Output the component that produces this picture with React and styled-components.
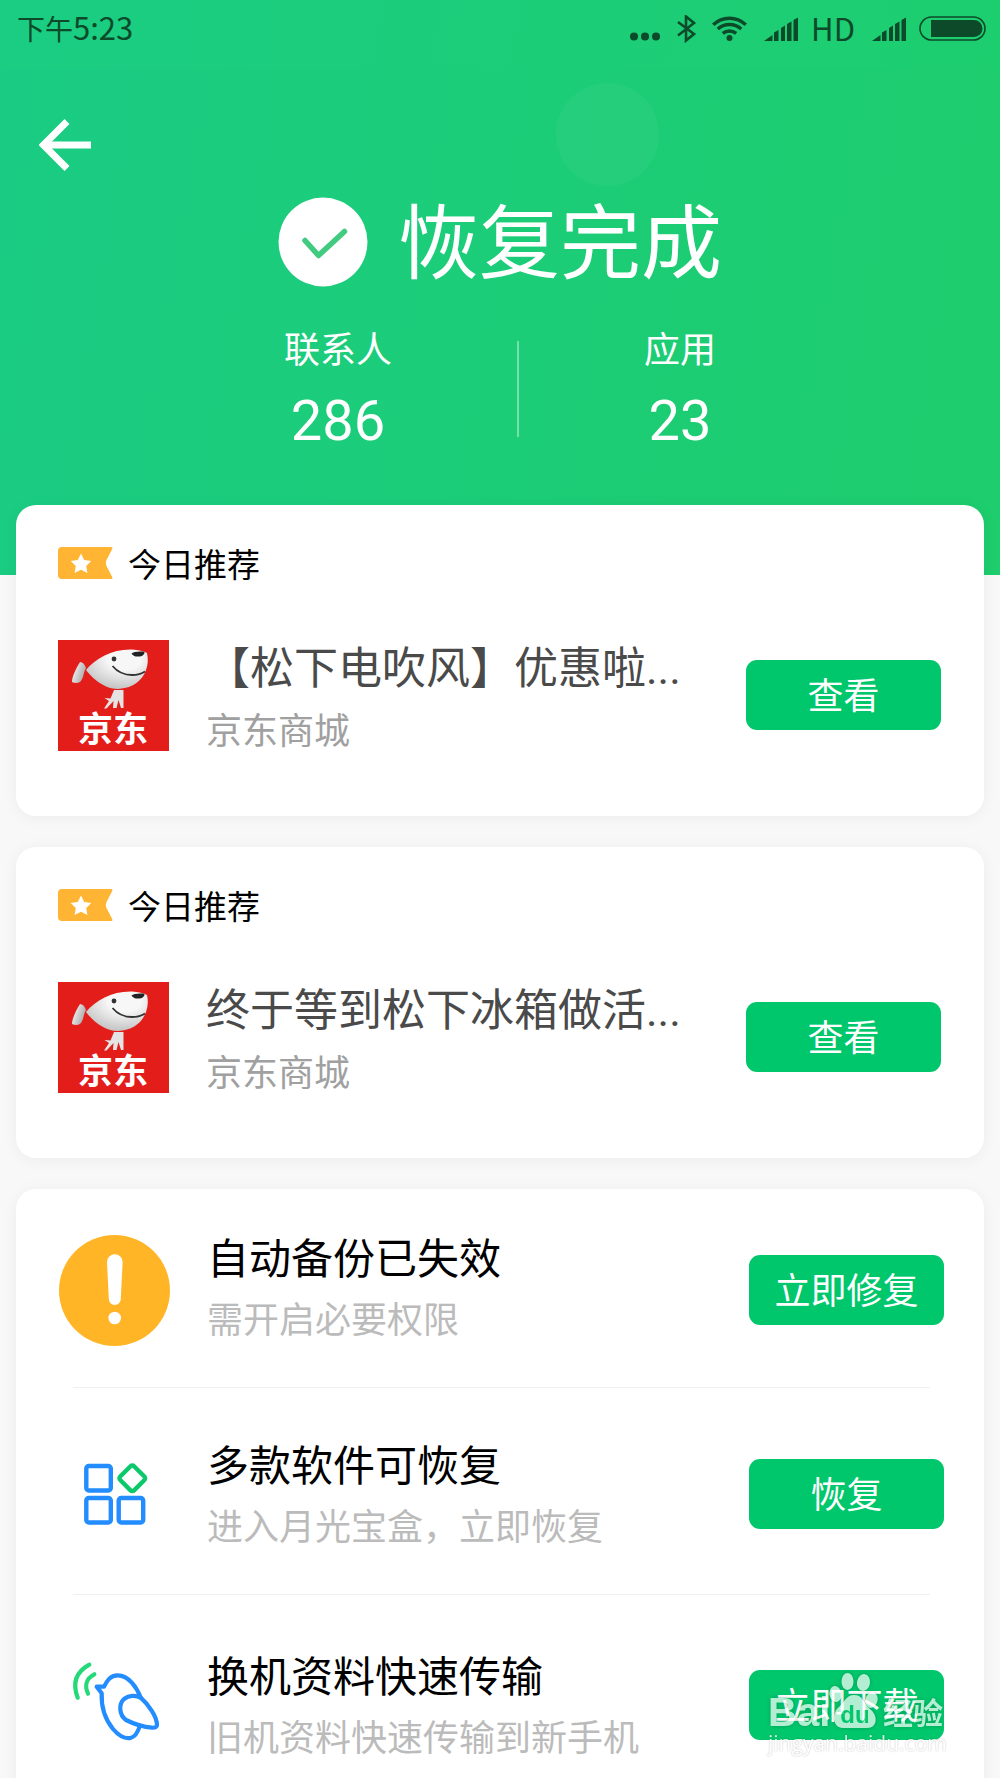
import React from 'react';
import styled, { createGlobalStyle } from 'styled-components';

const GlobalStyle = createGlobalStyle`
  * {
    box-sizing: border-box;
  }
  body {
    margin: 0;
    background: #f8f8f8;
    font-family: Roboto, 'Noto Sans CJK SC', sans-serif;
  }
  h1, h2, h3, p, dl, dt, dd, ul {
    margin: 0;
    padding: 0;
    font-weight: 400;
  }
  svg {
    display: block;
    flex: none;
  }
`;

const Screen = styled.div`
  position: relative;
  height: 100vh;
  overflow: hidden;
`;

const Hero = styled.header`
  position: relative;
  height: 575px;
  color: #fff;
  background: linear-gradient(100deg, #1acc84, #1ecd6c);
`;

const Bubble = styled.span`
  position: absolute;
  top: 83px;
  left: calc(50% + 56px);
  width: 103px;
  height: 103px;
  border-radius: 50%;
  background: rgba(255, 255, 255, 0.04);
`;

const StatusBar = styled.div`
  display: flex;
  align-items: center;
  justify-content: space-between;
  height: 69px;
  padding: 0 13px 12px 17px;
  font-family: 'Noto Sans CJK SC', sans-serif;
  color: #0c4a2a;
  background: rgba(30, 215, 130, 0.1);
`;

const StatusText = styled.span`
  padding-bottom: 2px;
  font-size: 31px;
  line-height: 44px;
`;

const Period = styled.span`
  font-size: 28px;
`;

const StatusIcons = styled.div`
  display: flex;
  align-items: center;
  gap: 13px;
`;

const BackButton = styled.button`
  display: block;
  margin: 42px 0 0 31px;
  padding: 8px;
  border: 0;
  background: none;
`;

const Headline = styled.div`
  display: flex;
  align-items: center;
  justify-content: center;
  gap: 30px;
  height: 90px;
  margin-top: 18px;
`;

const HeadlineText = styled.h1`
  padding-top: 6px;
  font-size: 81px;
  line-height: 90px;
`;

const Stats = styled.dl`
  display: flex;
  align-items: center;
  justify-content: center;
  gap: 125px;
  margin-top: 37px;
`;

const Stat = styled.div`
  text-align: center;
`;

const StatName = styled.dt`
  font-size: 36px;
  line-height: 54px;
`;

const StatValue = styled.dd`
  font-size: 56px;
  line-height: 86px;
`;

const StatDivider = styled.span`
  width: 2px;
  height: 96px;
  margin-bottom: 10px;
  background: rgba(255, 255, 255, 0.4);
`;

const Content = styled.main`
  position: relative;
  display: flex;
  flex-direction: column;
  gap: 31px;
  margin: -70px 16px 0;
`;

const Card = styled.section`
  border-radius: 20px;
  background: #fff;
  box-shadow: 0 2px 16px rgba(0, 0, 0, 0.05);
`;

const PromoCard = styled(Card)`
  padding: 34px 43px 56px 42px;
`;

const PromoHeader = styled.div`
  display: flex;
  align-items: center;
  gap: 15px;
  height: 48px;
  margin-bottom: 43px;
`;

const PromoHeading = styled.h2`
  padding-top: 5px;
  font-size: 33px;
  line-height: 48px;
  color: #000;
`;

const Row = styled.div`
  display: flex;
  align-items: center;
  gap: 37px;
`;

const Texts = styled.div`
  flex: 1;
  min-width: 0;
`;

const PromoTitle = styled.h3`
  padding-top: 4px;
  font-size: 44px;
  line-height: 70px;
  color: #4a4a4a;
  white-space: nowrap;
`;

const PromoShop = styled.p`
  font-size: 36px;
  line-height: 56px;
  color: #a0a0a0;
`;

const ActionButton = styled.button`
  flex: none;
  width: 195px;
  height: 70px;
  padding: 4px 0 0;
  border: 0;
  border-radius: 11px;
  font-family: inherit;
  font-size: 36px;
  line-height: 66px;
  color: #fff;
  background: #00c76c;
`;

const FeatureList = styled.ul`
  list-style: none;
`;

const FeatureItem = styled.li`
  & + &::before {
    content: '';
    display: block;
    height: 1px;
    margin: 0 54px 0 57px;
    background: #f0f0f0;
  }
`;

const FeatureRow = styled(Row)`
  padding: 42px 40px 36px 43px;
  ${FeatureItem}:first-child & {
    padding-top: 40px;
    padding-bottom: 36px;
  }
  ${FeatureItem}:last-child & {
    padding-top: 46px;
  }
`;

const FeatureTexts = styled(Texts)`
  ${FeatureItem} + ${FeatureItem} & {
    padding-top: 6px;
  }
`;

const FeatureTitle = styled.h3`
  font-size: 42px;
  line-height: 62px;
  color: #000;
`;

const FeatureNote = styled.p`
  font-size: 36px;
  line-height: 60px;
  color: #bbb;
`;

const Watermark = styled.div`
  position: absolute;
  right: 52px;
  bottom: 21px;
  width: 180px;
  color: #fff;
  pointer-events: none;
`;

const Brand = styled.div`
  display: flex;
  align-items: flex-end;
  height: 57px;
  opacity: 0.7;
  filter: drop-shadow(0 0 2px rgba(0, 0, 0, 0.3));
`;

const BrandLatin = styled.span`
  width: 61px;
  height: 44px;
  font: bold 40px/54px 'Liberation Sans', sans-serif;
`;

const BrandChinese = styled.span`
  margin-left: 5px;
  font-size: 30px;
  font-weight: 700;
  line-height: 30px;
`;

const BrandUrl = styled.div`
  font: 21px/28px 'Open Sans', sans-serif;
  opacity: 0.8;
  text-shadow: 0 0 2px rgba(0, 0, 0, 0.35);
`;

const DotsIcon = () => (
  <svg width="30" height="28" viewBox="0 0 30 28" fill="currentColor">
    <circle cx="4" cy="21.5" r="4" />
    <circle cx="15" cy="21.5" r="4" />
    <circle cx="26" cy="21.5" r="4" />
  </svg>
);

const BluetoothIcon = () => (
  <svg width="26" height="28" viewBox="0 0 26 28" fill="none" stroke="currentColor" strokeWidth="2.6">
    <path d="M5 7 21 19 13 25.5V1.5L21 8 5 20.5" />
  </svg>
);

const WifiIcon = () => (
  <svg width="35" height="28" viewBox="0 0 35 28" fill="none" stroke="currentColor" strokeWidth="3.4">
    <path d="M1.2 9.8a23.5 23.5 0 0 1 32.6 0" />
    <path d="M5.8 14a17.5 17.5 0 0 1 23.4 0" />
    <path d="M10.8 18.4a10.5 10.5 0 0 1 13.4 0" />
    <circle cx="17.5" cy="23" r="3" fill="currentColor" stroke="none" />
  </svg>
);

const SignalIcon = () => (
  <svg width="38" height="28" viewBox="0 0 38 28" fill="currentColor">
    <path d="M4 26 12.5 20V26Z" />
    <path d="M14 17.5 18.5 15V26H14Z" />
    <path d="M21 13 25 10.5V26H21Z" />
    <path d="M27 9 31.5 6.5V26H27Z" />
    <path d="M33.5 5 38 2.5V26H33.5Z" />
  </svg>
);

const BatteryIcon = () => (
  <svg width="68" height="28" viewBox="0 0 68 28">
    <rect x="1" y="2" width="65" height="23" rx="11.5" fill="none" stroke="currentColor" strokeWidth="1.6" />
    <path d="M12 5H55a8.5 8.5 0 0 1 0 17H12Z" fill="currentColor" />
  </svg>
);

const ArrowIcon = () => (
  <svg width="52" height="52" viewBox="0 0 52 52" fill="none" stroke="#fff" strokeWidth="7">
    <path d="M52 26H6" />
    <path d="M28 2.5 4.5 26 28 49.5" />
  </svg>
);

const CheckIcon = () => (
  <svg width="90" height="90" viewBox="0 0 90 90">
    <circle cx="45" cy="45" r="44.5" fill="#fff" />
    <path
      d="M27 43.5 40.5 58.5 66.5 34.5"
      fill="none"
      stroke="#40cb80"
      strokeWidth="5.5"
      strokeLinecap="round"
      strokeLinejoin="round"
    />
  </svg>
);

const TagIcon = () => (
  <svg width="55" height="32" viewBox="0 0 55 32">
    <path
      d="M4 0H53q2 0 1.2 2L48.5 13q-1.5 3 0 6L54.2 30q.8 2-1.2 2H4a4 4 0 0 1-4-4V4a4 4 0 0 1 4-4Z"
      fill="#ffb433"
    />
    <path
      d="M23 6.5 26.2 12.9 33.3 14 28.2 19 29.4 26 23 22.7 16.6 26 17.8 19 12.7 14 19.8 12.9Z"
      fill="#fff"
    />
  </svg>
);

const ShopLogo = () => (
  <svg width="111" height="111" viewBox="0 0 111 111">
    <defs>
      <radialGradient id="fur" cx="0.62" cy="0.25" r="0.75">
        <stop offset="0.35" stopColor="#f7f7f7" />
        <stop offset="1" stopColor="#c4c4c4" />
      </radialGradient>
      <linearGradient id="ear" x1="0" y1="0" x2="1" y2="0.5">
        <stop offset="0.3" stopColor="#e8e8e8" />
        <stop offset="1" stopColor="#a8a8a8" />
      </linearGradient>
    </defs>
    <rect width="111" height="111" fill="#e31d1a" />
    <path d="M22 22C18 28 14 37 14 42Q18 44 22 42C26 38 25 33 28 28Q26 22 22 22Z" fill="url(#ear)" />
    <path
      d="M28 30C38 18 54 9 74 9.5Q84 10 89 13Q91 22 88 30C84 41 75 48 60 49C46 49 34 38 28 30Z"
      fill="url(#fur)"
    />
    <circle cx="56" cy="19" r="2.4" fill="#333" />
    <path d="M73.5 13.5Q76 11 85.5 11.5Q88 13 84 16Q76 18 73.5 13.5Z" fill="#222" />
    <path d="M54.5 26Q62 35 74 35Q82 35 87 31.5" fill="none" stroke="#333" strokeWidth="1.8" />
    <path
      d="M56 50H65.5V68H63L60.5 60L58.5 68H55L55.5 61L48.5 68.5H46L51 61L46.5 58L52.5 58.5Z"
      fill="#e4e4e4"
    />
    <text
      x="55"
      y="102"
      textAnchor="middle"
      fontFamily="Noto Sans CJK SC, sans-serif"
      fontSize="35"
      fontWeight="700"
      fill="#fff"
    >
      京东
    </text>
  </svg>
);

const AlertIcon = () => (
  <svg width="111" height="111" viewBox="0 0 111 111">
    <circle cx="55.5" cy="55.5" r="55.5" fill="#ffb526" />
    <path d="M48 27a7.8 7.8 0 0 1 15.6 0L61.8 64a6 6 0 0 1-12 0Z" fill="#fff" />
    <circle cx="55.7" cy="83" r="6.3" fill="#fff" />
  </svg>
);

const AppsIcon = () => (
  <svg width="111" height="111" viewBox="0 0 111 111" fill="none" stroke="#238cff" strokeWidth="4.4">
    <rect x="27.3" y="27" width="24.5" height="24.5" rx="2.5" />
    <rect x="27.3" y="59" width="24.5" height="24.5" rx="2.5" />
    <rect x="59.7" y="59" width="24.5" height="24.5" rx="2.5" />
    <rect x="63.5" y="29.5" width="19.6" height="19.6" rx="2.5" transform="rotate(45 73.3 39.3)" stroke="#0bc96b" />
  </svg>
);

const BirdIcon = () => (
  <svg
    width="111"
    height="111"
    viewBox="0 0 111 111"
    fill="none"
    stroke="#238cff"
    strokeWidth="4.2"
    strokeLinecap="round"
    strokeLinejoin="round"
  >
    <path d="M30.3 14.7C17 22 13 33 18.7 47.7" stroke="#25d978" />
    <path d="M35.3 24.3C27 28.5 25.5 36 29 43.7" stroke="#25d978" />
    <path d="M81.7 47.7C78 38 70 25.3 58.7 25.3C51 25.3 48 31 45 36.7H37.7L42.7 43.3C42 58 46 69 54 79C60 86 66 89 71.5 88C76 87 79 82 81 75.5" />
    <path d="M81.7 47.7C90 55 98 67 98 75Q98 78 93 77.7C84 77 75 74 67 70C60 65 59.5 54 65 49C70 45 77 45 81.7 47.7Z" />
  </svg>
);

const PawIcon = () => (
  <svg width="49" height="57" viewBox="0 0 49 57" fill="#fff">
    <ellipse cx="6.5" cy="22" rx="6" ry="8" transform="rotate(-10 6.5 22)" />
    <ellipse cx="18.5" cy="9.5" rx="6" ry="8.5" />
    <ellipse cx="34.5" cy="10.5" rx="6.5" ry="8.5" transform="rotate(10 34.5 10.5)" />
    <ellipse cx="42.5" cy="28" rx="6" ry="8" transform="rotate(15 42.5 28)" />
    <path d="M25 23C17 23 15 31 10 35C3 40 3 56 14 56H38C49 56 49 43 41 37C34 31 34 23 25 23Z" />
    <text
      x="26"
      y="51"
      textAnchor="middle"
      fontFamily="Liberation Sans, sans-serif"
      fontSize="24"
      fontWeight="700"
      fill="#00c76c"
    >
      du
    </text>
  </svg>
);

const stats = [
  { name: '联系人', value: 286 },
  { name: '应用', value: 23 },
];

const promos = [
  { title: '【松下电吹风】优惠啦...', shop: '京东商城' },
  { title: '终于等到松下冰箱做活...', shop: '京东商城' },
];

const features = [
  { title: '自动备份已失效', note: '需开启必要权限', action: '立即修复', Icon: AlertIcon },
  { title: '多款软件可恢复', note: '进入月光宝盒，立即恢复', action: '恢复', Icon: AppsIcon },
  { title: '换机资料快速传输', note: '旧机资料快速传输到新手机', action: '立即下载', Icon: BirdIcon },
];

const Promo = ({ promo }) => (
  <PromoCard>
    <PromoHeader>
      <TagIcon />
      <PromoHeading>今日推荐</PromoHeading>
    </PromoHeader>
    <Row>
      <ShopLogo />
      <Texts>
        <PromoTitle>{promo.title}</PromoTitle>
        <PromoShop>{promo.shop}</PromoShop>
      </Texts>
      <ActionButton type="button">查看</ActionButton>
    </Row>
  </PromoCard>
);

const Feature = ({ feature }) => {
  const { Icon, title, note, action } = feature;
  return (
    <FeatureItem>
      <FeatureRow>
        <Icon />
        <FeatureTexts>
          <FeatureTitle>{title}</FeatureTitle>
          <FeatureNote>{note}</FeatureNote>
        </FeatureTexts>
        <ActionButton type="button">{action}</ActionButton>
      </FeatureRow>
    </FeatureItem>
  );
};

const App = () => (
  <Screen>
    <GlobalStyle />
    <Hero>
      <Bubble />
      <StatusBar>
        <StatusText>
          <Period>下午</Period>5:23
        </StatusText>
        <StatusIcons>
          <DotsIcon />
          <BluetoothIcon />
          <WifiIcon />
          <SignalIcon />
          <StatusText>HD</StatusText>
          <SignalIcon />
          <BatteryIcon />
        </StatusIcons>
      </StatusBar>
      <BackButton type="button" aria-label="返回">
        <ArrowIcon />
      </BackButton>
      <Headline>
        <CheckIcon />
        <HeadlineText>恢复完成</HeadlineText>
      </Headline>
      <Stats>
        {stats.map((stat, i) => (
          <React.Fragment key={stat.name}>
            {i > 0 && <StatDivider />}
            <Stat>
              <StatName>{stat.name}</StatName>
              <StatValue>{stat.value}</StatValue>
            </Stat>
          </React.Fragment>
        ))}
      </Stats>
    </Hero>
    <Content>
      {promos.map((promo) => (
        <Promo key={promo.title} promo={promo} />
      ))}
      <Card>
        <FeatureList>
          {features.map((feature) => (
            <Feature key={feature.title} feature={feature} />
          ))}
        </FeatureList>
      </Card>
    </Content>
    <Watermark>
      <Brand>
        <BrandLatin>Bai</BrandLatin>
        <PawIcon />
        <BrandChinese>经验</BrandChinese>
      </Brand>
      <BrandUrl>jingyan.baidu.com</BrandUrl>
    </Watermark>
  </Screen>
);

export default App;
